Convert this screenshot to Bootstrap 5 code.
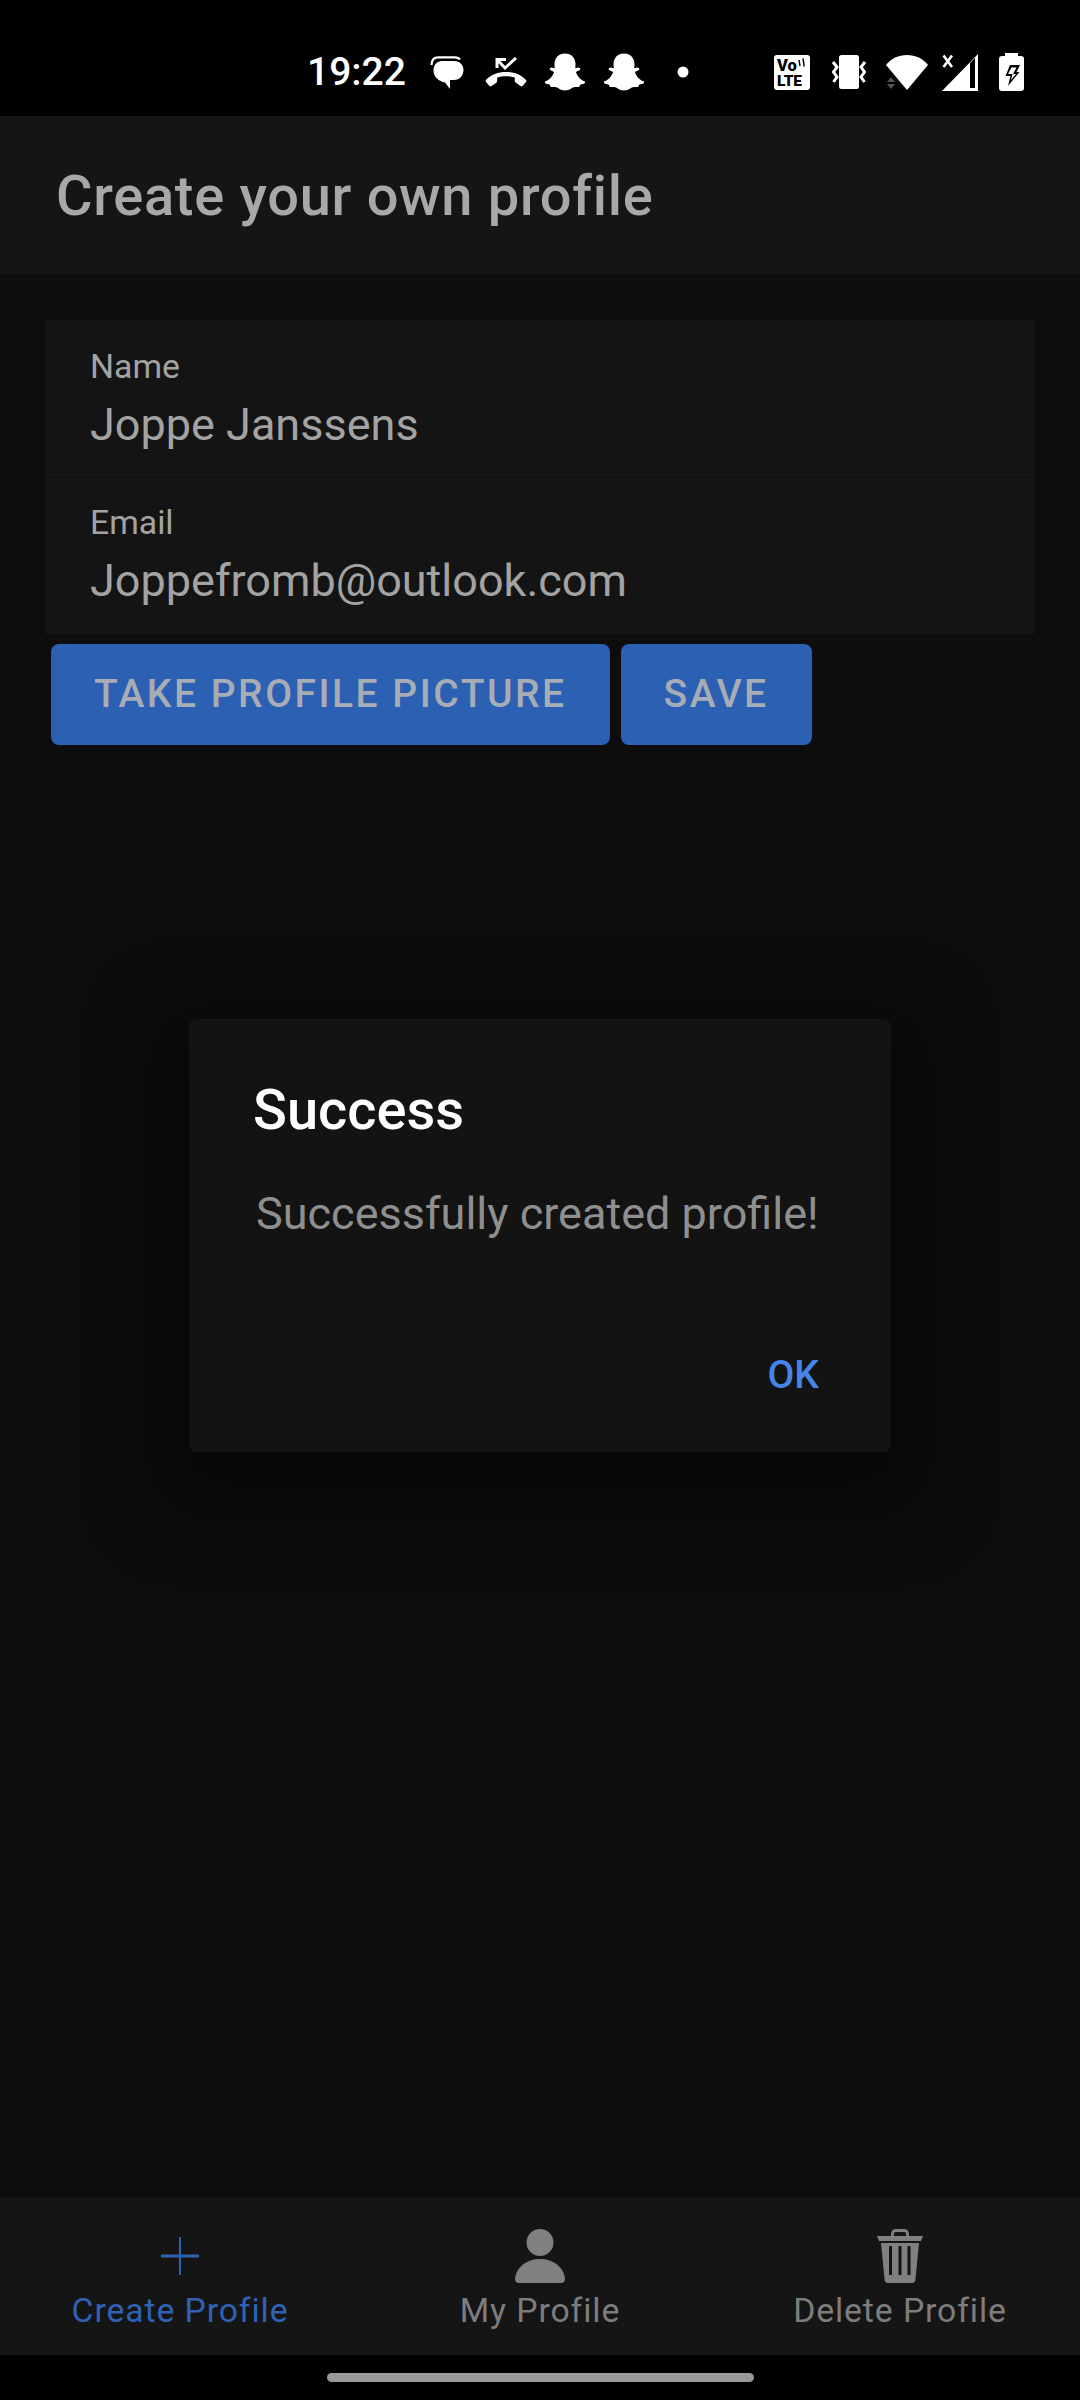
<!DOCTYPE html>
<html lang="en">
<head>
  <meta charset="UTF-8">
  <title>Create your own profile</title>
  <link rel="stylesheet" href="https://cdn.jsdelivr.net/npm/bootstrap@5.3.2/dist/css/bootstrap.min.css">
  <style>
    body { background: #000; font-family: Roboto, "Liberation Sans", sans-serif; height: 2400px; width: 1080px; overflow: hidden; }
    .sb { height: 116px; background: #000; padding: 28px 0 0 307px; color: #fff; flex: none; }
    .sb-time { font-size: 39px; font-weight: 500; line-height: 1; width: 97px; }
    .sb svg { display: block; flex: none; }
    .ic-msg { margin-left: 26px; } .ic-call { margin-left: 21px; } .ic-g1 { margin-left: 18px; } .ic-g2 { margin-left: 19px; }
    .ic-dot { margin-left: 33px; } .ic-lte { margin-left: 85px; } .ic-vib { margin-left: 21px; } .ic-wifi { margin-left: 19px; }
    .ic-sig { margin-left: 14px; } .ic-bat { margin-left: 21px; }
    .top-bar { height: 158px; background: #151515; padding: 2px 0 0 56px; flex: none; }
    .top-title { font-size: 56px; font-weight: 500; color: #a8a8a8; letter-spacing: .7px; margin: 0; line-height: 1; }
    .app-main { background: #0d0d0d; padding: 46px 45px 0; }
    .fields { background: #141414; }
    .fld { padding: 0 45px; }
    .fld-a { height: 154px; padding-top: 27px; }
    .fld-b { height: 160px; padding-top: 28px; border-top: 1px solid #1a1a1a; }
    .fld-lbl { font-size: 33.750px; line-height: 40px; color: #a3a3a3; }
    .fld-val { font-size: 45px; line-height: 60px; margin-top: 8px; color: #a3a3a3; }
    .btn-row { margin: 10px 0 0 6px; gap: 11px; }
    .btn-app { background: #2c60b3; color: #a8adb5; height: 101px; font-size: 39px; font-weight: 500; letter-spacing: 2.500px; padding: 0 43px; border: 0; border-radius: 8px; text-transform: uppercase; }
    .btn-app:hover { background: #2c60b3; color: #a8adb5; }
    .dlg-wrap { pointer-events: none; }
    .dlg { width: 702px; height: 433px; background: #131313; border-radius: 8px; box-shadow: 0 26px 70px 30px rgba(0,0,0,.5); }
    .dlg-title { font-size: 56px; font-weight: 500; color: #fff; line-height: 60px; margin: 61px 0 0 64px; }
    .dlg-text { font-size: 45px; color: #8f8f8f; line-height: 60px; margin: 44px 0 0 67px; }
    .dlg-ok { font-size: 39px; font-weight: 500; color: #4584e8; padding: 0 72px 0 0; margin-top: 106px; line-height: 50px; border: 0; background: none; align-self: flex-end; }
    .bot-nav { height: 158px; background: #151515; flex: none; }
    .nav-cell { height: 158px; color: #7d7d7d; font-size: 33.750px; letter-spacing: .9px; }
    .nav-cell svg { display: block; flex: none; height: 54px; margin-top: 32px; }
    .nav-lbl { line-height: 40px; margin-top: 8px; }
    .nav-on { color: #2f62b5; }
    .home-strip { height: 45px; background: #000; flex: none; padding-top: 18px; }
    .home-pill { width: 427px; height: 9px; background: #999; border-radius: 5px; }
  </style>
</head>
<body class="d-flex flex-column">
  <div class="sb d-flex align-items-center">
    <span class="sb-time">19:22</span>
    <svg class="ic-msg" width="34" height="33" viewBox="0 0 34 33" fill="#fff"><path d="M1.500 9C1.500 4 4 1.300 8 1.300H25c2.500 0 4 .7 5 2.200" fill="none" stroke="#fff" stroke-width="2.200"/><path d="M12 5H24C30 5 33.500 9 33.500 14S30 24 24 24H20V33L15 26.500C9 25.500 3.500 21 3.500 14.500 3.500 9 7 5 12 5z"/></svg>
    <svg class="ic-call" width="42" height="30" viewBox="0 0 42 30" fill="#fff"><path d="M21 2.500H12V11M12 2.500L20 11 31 1" fill="none" stroke="#fff" stroke-width="3"/><path d="M21 15c8 0 15 2.500 20 8 .5.700.5 1.300 0 2l-3.500 4c-.7.600-1.400.600-2 .1l-5-3.600c-.5-.4-.7-.9-.7-1.500v-3.500c-5.500-1.800-12.100-1.800-17.600 0V24c0 .6-.2 1.100-.7 1.500l-5 3.600c-.6.500-1.300.5-2-.1L1 25c-.5-.7-.5-1.300 0-2C6 17.500 13 15 21 15z"/></svg>
    <svg class="ic-g1" width="40" height="38" viewBox="0 0 40 37" fill="#fff"><path d="M20 0c6.500 0 10.500 4.800 10.500 10.500l-.2 4.300 3-.9c1.300 0 2 .8 2 1.500 0 1.300-3.200 2-4.300 3.100.6 3 4.500 8.300 8.500 9.300.6.200.8.6.6 1.200-.4 1.100-2.800 1.700-5 2.200-.5.900-.3 2.300-1.300 2.400-1.600.1-3.200-.5-5 .2C27 34 25 37 20 37s-7-3-8.800-3.200c-1.800-.7-3.400-.1-5-.2-1-.1-.8-1.500-1.300-2.400-2.200-.5-4.600-1.100-5-2.200-.2-.6 0-1 .6-1.200 4-1 7.900-6.300 8.500-9.300-1.100-1.100-4.300-1.800-4.300-3.100 0-.7.7-1.500 2-1.500l3 .9-.2-4.300C9.500 4.800 13.500 0 20 0z"/></svg>
    <svg class="ic-g2" width="40" height="38" viewBox="0 0 40 37" fill="#fff"><path d="M20 0c6.500 0 10.500 4.800 10.500 10.500l-.2 4.300 3-.9c1.300 0 2 .8 2 1.500 0 1.300-3.200 2-4.300 3.100.6 3 4.500 8.300 8.500 9.300.6.200.8.6.6 1.200-.4 1.100-2.800 1.700-5 2.200-.5.900-.3 2.300-1.300 2.400-1.600.1-3.200-.5-5 .2C27 34 25 37 20 37s-7-3-8.800-3.200c-1.800-.7-3.400-.1-5-.2-1-.1-.8-1.500-1.300-2.400-2.200-.5-4.600-1.100-5-2.200-.2-.6 0-1 .6-1.200 4-1 7.900-6.300 8.500-9.300-1.100-1.100-4.300-1.800-4.300-3.100 0-.7.7-1.500 2-1.500l3 .9-.2-4.300C9.500 4.800 13.500 0 20 0z"/></svg>
    <svg class="ic-dot" width="12" height="12" viewBox="0 0 12 12" fill="#fff"><circle cx="6" cy="6" r="5.500"/></svg>
    <svg class="ic-lte" width="36" height="35" viewBox="0 0 36 35"><rect width="36" height="35" rx="3" fill="#fff"/><text x="3" y="16" font-family="Roboto, sans-serif" font-weight="900" font-size="16.500" fill="#000">Vo</text><text x="3" y="31" font-family="Roboto, sans-serif" font-weight="900" font-size="15.500" letter-spacing="-.2" fill="#000">LTE</text><path d="M25 5l1 6M29 3.500l1.200 8" stroke="#000" stroke-width="1.500" fill="none"/></svg>
    <svg class="ic-vib" width="36" height="34" viewBox="0 0 36 34" fill="#fff"><rect x="8" y="0" width="20" height="34" rx="2.500"/><path d="M2 7l4 5-3.500 5 3.500 5-3.500 5" fill="none" stroke="#fff" stroke-width="3"/><path d="M34 7l-4 5 3.500 5-3.500 5 3.500 5" fill="none" stroke="#fff" stroke-width="3"/></svg>
    <svg class="ic-wifi" width="42" height="35" viewBox="0 0 42 35"><path d="M0 10C5 3.500 12.500 0 21 0s16 3.500 21 10L21 35z" fill="#fff"/><path d="M1 27l4-5 4 5zM1 29h8l-4 5z" fill="#555"/></svg>
    <svg class="ic-sig" width="36" height="37" viewBox="0 0 36 37" fill="#fff"><path fill-rule="evenodd" d="M36 0V37H0zM28 9V34H33V4z"/><path d="M1.500 1.500L10 13M10 1.500L1.500 13" fill="none" stroke="#fff" stroke-width="2.600"/></svg>
    <svg class="ic-bat" width="25" height="38" viewBox="0 0 25 38"><path d="M6 0h13v3h3a3 3 0 0 1 3 3v29a3 3 0 0 1-3 3H3a3 3 0 0 1-3-3V6a3 3 0 0 1 3-3h3z" fill="#fff"/><path d="M11 12H21L17.500 19H20.500L9 33 11.500 23H6.500z" fill="#000"/><path d="M12.500 14.500H17.500L14 21H17L12 27 13.500 21H9z" fill="#fff"/></svg>
  </div>

  <div class="top-bar d-flex align-items-center">
    <h1 class="top-title">Create your own profile</h1>
  </div>

  <div class="app-main flex-grow-1 position-relative">
    <div class="fields">
      <div class="fld fld-a">
        <div class="fld-lbl">Name</div>
        <div class="fld-val">Joppe Janssens</div>
      </div>
      <div class="fld fld-b">
        <div class="fld-lbl">Email</div>
        <div class="fld-val">Joppefromb@outlook.com</div>
      </div>
    </div>
    <div class="d-flex btn-row">
      <button type="button" class="btn btn-app">Take profile picture</button>
      <button type="button" class="btn btn-app">Save</button>
    </div>

    <div class="dlg-wrap position-absolute top-0 start-0 w-100 h-100 d-flex align-items-center justify-content-center">
      <div class="dlg d-flex flex-column">
        <div class="dlg-title">Success</div>
        <div class="dlg-text">Successfully created profile!</div>
        <button type="button" class="dlg-ok">OK</button>
      </div>
    </div>
  </div>

  <div class="bot-nav row g-0">
    <div class="col-4 nav-cell nav-on d-flex flex-column align-items-center">
      <svg width="40" height="54" viewBox="0 0 40 54"><path d="M20 8v38" stroke="#2f62b5" stroke-width="2" fill="none"/><path d="M1 27h38" stroke="#2f62b5" stroke-width="3" fill="none"/></svg>
      <div class="nav-lbl">Create Profile</div>
    </div>
    <div class="col-4 nav-cell d-flex flex-column align-items-center">
      <svg width="50" height="54" viewBox="0 0 50 54" fill="#808080"><circle cx="25" cy="13.500" r="13.500"/><path d="M0 50C1 38 12 30 25 30S49 38 50 50c0 2.500-1.500 4-3.500 4h-43C1.500 54 0 52.500 0 50z"/></svg>
      <div class="nav-lbl">My Profile</div>
    </div>
    <div class="col-4 nav-cell d-flex flex-column align-items-center">
      <svg width="46" height="54" viewBox="0 0 46 54" fill="#808080"><path d="M15.500 8V4.500a3 3 0 0 1 3-3h9a3 3 0 0 1 3 3V8" fill="none" stroke="#808080" stroke-width="2.800"/><path d="M0 7H46L44 12H2z"/><path fill-rule="evenodd" d="M4 14H42L38.500 50a4 4 0 0 1-4 4H11.500a4 4 0 0 1-4-4zM12 17V46H15V17zM21.500 17V46H24.500V17zM30.500 17V46H33.500V17z"/></svg>
      <div class="nav-lbl">Delete Profile</div>
    </div>
  </div>

  <div class="home-strip d-flex justify-content-center">
    <div class="home-pill"></div>
  </div>

  <script src="https://cdn.jsdelivr.net/npm/bootstrap@5.3.2/dist/js/bootstrap.bundle.min.js"></script>
</body>
</html>
